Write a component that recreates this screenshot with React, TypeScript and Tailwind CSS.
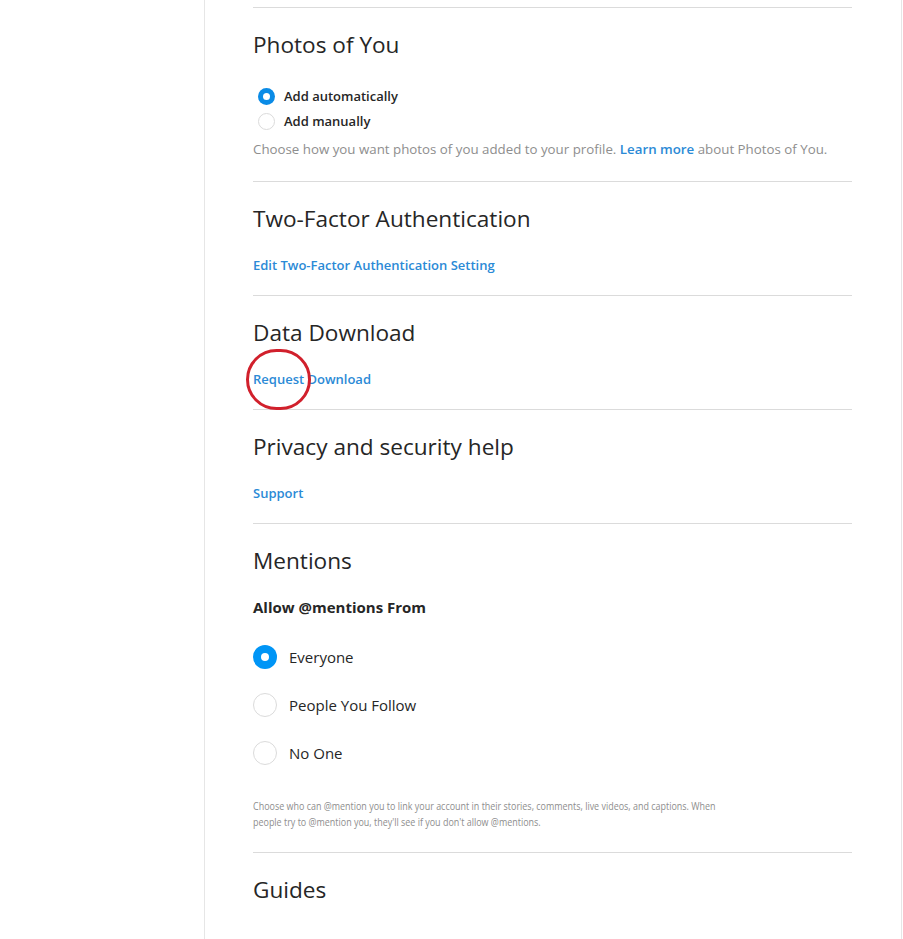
import React from "react";

const font = { fontFamily: '"Open Sans", "Noto Sans", sans-serif' };

function SmallRadio({ checked, label }: { checked?: boolean; label: string }) {
  return (
    <div className="flex h-[25px] items-center pl-[5px]">
      {checked ? (
        <span className="flex h-[17px] w-[17px] items-center justify-center rounded-full bg-[#0a8be6]">
          <span className="h-[7px] w-[7px] rounded-full bg-white" />
        </span>
      ) : (
        <span className="h-[17px] w-[17px] rounded-full border border-[#dbdbdb] bg-white" />
      )}
      <span className="ml-[9px] text-[13px] font-semibold text-[#262626]">{label}</span>
    </div>
  );
}

function BigRadio({ checked, label }: { checked?: boolean; label: string }) {
  return (
    <div className="flex h-[48px] items-center">
      {checked ? (
        <span className="flex h-[24px] w-[24px] items-center justify-center rounded-full bg-[#0095f6]">
          <span className="h-[8px] w-[8px] rounded-full bg-white" />
        </span>
      ) : (
        <span className="h-[24px] w-[24px] rounded-full border border-[#dbdbdb] bg-white" />
      )}
      <span className="ml-[12px] text-[15px] text-[#262626]">{label}</span>
    </div>
  );
}

function Heading({ children }: { children: React.ReactNode }) {
  return (
    <h2 className="mt-[21px] h-[32px] text-[22.6px] leading-[32px] font-normal text-[#262626] whitespace-nowrap">
      {children}
    </h2>
  );
}

function LinkSection({ title, link, circle }: { title: string; link: string; circle?: boolean }) {
  return (
    <section className="border-t border-[#dbdbdb] pb-[21px]">
      <Heading>{title}</Heading>
      <div className="relative mt-[19px] h-[20px] leading-[20px]">
        <a className="text-[13px] font-semibold text-[#2b8ad6]">{link}</a>
        {circle && (
          <span className="pointer-events-none absolute left-[-7px] top-[-19px] h-[61px] w-[65px] rounded-full border-[3.5px] border-[#d1202c]" />
        )}
      </div>
    </section>
  );
}

export default function App() {
  return (
    <div className="flex min-h-[939px] w-[903px] bg-white" style={font}>
      <div className="w-[204px] shrink-0" />
      <main className="w-[698px] shrink-0 border-l border-r border-[#e6e6e6] pl-[48px] pr-[49px] pt-[7px]">
        <section className="border-t border-[#dbdbdb] pb-[22px]">
          <Heading>Photos of You</Heading>
          <div className="mt-[23px]">
            <SmallRadio checked label="Add automatically" />
            <SmallRadio label="Add manually" />
          </div>
          <p className="mt-[5px] h-[20px] text-[13.3px] leading-[20px] text-[#8e8e8e] whitespace-nowrap">
            Choose how you want photos of you added to your profile.{" "}
            <a className="font-semibold text-[#2b8ad6]">Learn more</a> about Photos of You.
          </p>
        </section>

        <LinkSection title="Two-Factor Authentication" link="Edit Two-Factor Authentication Setting" />
        <LinkSection title="Data Download" link="Request Download" circle />
        <LinkSection title="Privacy and security help" link="Support" />

        <section className="border-t border-[#dbdbdb] pb-[22px]">
          <Heading>Mentions</Heading>
          <div className="mt-[18px] h-[24px] text-[15px] leading-[24px] font-bold text-[#262626]">
            Allow @mentions From
          </div>
          <div className="mt-[14px]">
            <BigRadio checked label="Everyone" />
            <BigRadio label="People You Follow" />
            <BigRadio label="No One" />
          </div>
          <p className="mt-[21px] origin-left scale-x-[0.8] text-[11.2px] leading-[16px] text-[#8e8e8e]">
            <span className="block whitespace-nowrap">
              Choose who can @mention you to link your account in their stories, comments, live videos, and captions. When
            </span>
            <span className="block whitespace-nowrap">
              people try to @mention you, they'll see if you don't allow @mentions.
            </span>
          </p>
        </section>

        <section className="border-t border-[#dbdbdb]">
          <Heading>Guides</Heading>
        </section>
      </main>
    </div>
  );
}
